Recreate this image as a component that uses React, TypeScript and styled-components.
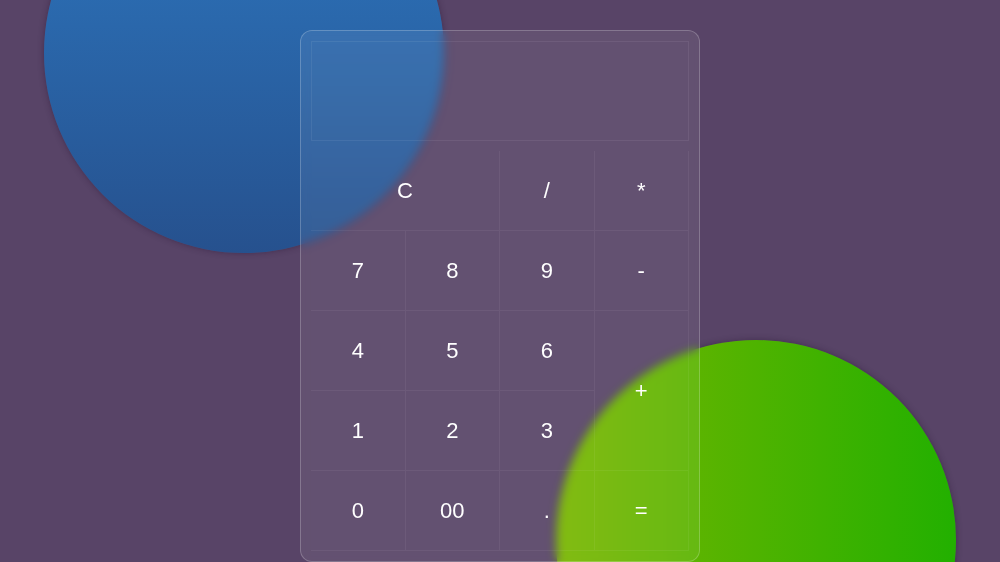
import React from "react";
import styled, { createGlobalStyle } from "styled-components";

const Global = createGlobalStyle`
  html, body {
    margin: 0;
    padding: 0;
    background: #584467;
    font-family: "Liberation Sans", Arial, sans-serif;
    overflow: hidden;
  }
  #root { min-height: 562px; }
`;

const Page = styled.div`
  position: relative;
  width: 1000px;
  height: 562px;
  overflow: hidden;
  display: flex;
  justify-content: center;
  align-items: flex-start;
  padding-top: 30px;
  box-sizing: border-box;
`;

const Circle = styled.div<{ $variant: "blue" | "green" }>`
  position: absolute;
  width: 400px;
  height: 400px;
  border-radius: 50%;
  box-shadow: 0 0 6px rgba(40, 20, 50, 0.45);
  ${(p) =>
    p.$variant === "blue"
      ? `left: 44px; top: -147px; background: linear-gradient(to bottom, #2d78c1, #26518e);`
      : `left: 556px; top: 340px; background: linear-gradient(to right, #7ab600, #22b000);`}
`;

const Panel = styled.div`
  position: relative;
  z-index: 1;
  width: 400px;
  box-sizing: border-box;
  padding: 10px;
  border-radius: 12px;
  border: 1px solid rgba(255, 255, 255, 0.22);
  background: rgba(255, 255, 255, 0.07);
  backdrop-filter: blur(5px);
  -webkit-backdrop-filter: blur(5px);
  display: flex;
  flex-direction: column;
  gap: 10px;
`;

const Display = styled.div`
  height: 100px;
  box-sizing: border-box;
  border: 1px solid rgba(255, 255, 255, 0.07);
`;

const Keys = styled.div`
  display: grid;
  grid-template-columns: repeat(4, 1fr);
  grid-auto-rows: 80px;
`;

const Key = styled.button<{ $wide?: boolean; $tall?: boolean }>`
  all: unset;
  display: flex;
  align-items: center;
  justify-content: center;
  box-sizing: border-box;
  border-right: 1px solid rgba(255, 255, 255, 0.06);
  border-bottom: 1px solid rgba(255, 255, 255, 0.06);
  color: #ffffff;
  font-family: "Liberation Sans", Arial, sans-serif;
  font-size: 22px;
  cursor: pointer;
  grid-column: ${(p) => (p.$wide ? "span 2" : "auto")};
  grid-row: ${(p) => (p.$tall ? "span 2" : "auto")};
`;

const keys: { label: string; wide?: boolean; tall?: boolean }[] = [
  { label: "C", wide: true },
  { label: "/" },
  { label: "*" },
  { label: "7" },
  { label: "8" },
  { label: "9" },
  { label: "-" },
  { label: "4" },
  { label: "5" },
  { label: "6" },
  { label: "+", tall: true },
  { label: "1" },
  { label: "2" },
  { label: "3" },
  { label: "0" },
  { label: "00" },
  { label: "." },
  { label: "=" },
];

export default function App() {
  return (
    <Page>
      <Global />
      <Circle $variant="blue" />
      <Circle $variant="green" />
      <Panel>
        <Display />
        <Keys>
          {keys.map((k) => (
            <Key key={k.label} $wide={k.wide} $tall={k.tall}>
              {k.label}
            </Key>
          ))}
        </Keys>
      </Panel>
    </Page>
  );
}
